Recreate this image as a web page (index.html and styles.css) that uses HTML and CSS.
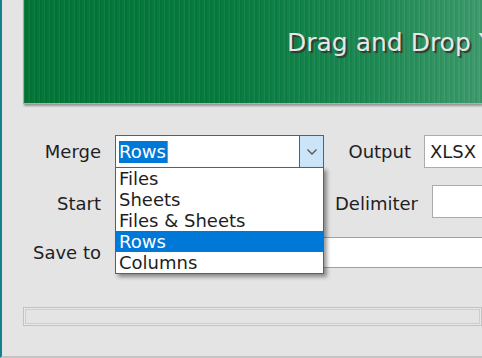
FILE: index.html
```html
<!DOCTYPE html>
<html lang="en">
<head>
    <meta charset="UTF-8">
    <title>Merge</title>
    <link rel="stylesheet" href="styles.css">
</head>
<body>
    <div class="banner">
        <span class="bannerText">Drag and Drop Your Files Here</span>
    </div>

    <div class="form">
        <div class="row rowMerge">
            <label class="label">Merge</label>
            <div class="combo">
                <div class="comboValue"><span class="selText">Rows</span></div>
                <div class="comboButton">
                    <svg width="10" height="6" viewBox="0 0 10 6"><path d="M0.5 0.5 L5 5 L9.5 0.5" fill="none" stroke="#555" stroke-width="1.3"/></svg>
                </div>
                <!-- open dropdown list -->
                <ul class="comboList">
                    <li>Files</li>
                    <li>Sheets</li>
                    <li>Files &amp; Sheets</li>
                    <li class="active">Rows</li>
                    <li>Columns</li>
                </ul>
            </div>
            <label class="subLabel outputLabel">Output</label>
            <div class="box">XLSX</div>
        </div>

        <div class="row rowStart">
            <label class="label">Start</label>
            <div class="field startField"></div>
            <label class="subLabel delimLabel">Delimiter</label>
            <div class="box"></div>
        </div>

        <div class="row rowSave">
            <label class="label">Save to</label>
            <div class="field saveField"></div>
        </div>
    </div>

    <div class="progress"></div>
</body>
</html>
```

FILE: styles.css
```css
body {
    margin: 0;
    width: 482px;
    height: 358px;
    box-sizing: border-box;
    border-left: 2px solid #14808a;
    border-bottom: 2px solid #c4c4c4;
    background: #e4e4e4;
    overflow: hidden;
    font-family: "DejaVu Sans", sans-serif;
    font-size: 18px;
    color: #1e1e24;
}

.banner {
    margin-left: 21px;
    height: 104px;
    box-sizing: border-box;
    border-left: 1px solid #a3aaa5;
    border-bottom: 1px solid #9fb8a8;
    box-shadow: 1px 2px 2px rgba(0,0,0,0.35);
    background:
        repeating-linear-gradient(90deg, rgba(255,255,255,0.05) 0 1px, rgba(0,0,0,0.05) 1px 3px, rgba(255,255,255,0) 3px 5px),
        linear-gradient(90deg, #037638 0%, #077c40 45%, #1d8a53 75%, #3e9c6d 100%);
    padding: 28px 0 0 263px;
    white-space: nowrap;
}

.bannerText {
    font-size: 25px;
    line-height: 30px;
    color: #e6e8e6;
    text-shadow: 2px 2px 1px #2f3a33;
}

.form {
    padding-top: 31px;
}

.row {
    display: flex;
    align-items: stretch;
}

.rowMerge {
    height: 33px;
}

.rowStart {
    margin-top: 17px;
    height: 33px;
}

.rowStart .label,
.rowStart .subLabel {
    padding-top: 4px;
}

.rowSave {
    margin-top: 19px;
    height: 31px;
}

.label {
    width: 99px;
    margin-right: 14px;
    display: flex;
    align-items: center;
    justify-content: flex-end;
    box-sizing: border-box;
}

.combo {
    position: relative;
    width: 209px;
    box-sizing: border-box;
    display: flex;
    border: 1px solid #0078d7;
    background: #fff;
}

.comboValue {
    flex: 1;
    display: flex;
    align-items: center;
    padding-left: 3px;
}

.selText {
    background: #0078d7;
    color: #fff;
    line-height: 22px;
    padding-right: 1px;
    border-right: 1px solid #d9822b;
}

.comboButton {
    width: 23px;
    border-left: 1px solid #0078d7;
    background: #cce4f7;
    display: flex;
    align-items: center;
    justify-content: center;
}

.comboList {
    position: absolute;
    left: -1px;
    top: 31px;
    width: 209px;
    box-sizing: border-box;
    margin: 0;
    padding: 0;
    list-style: none;
    background: #fff;
    border: 1px solid #0078d7;
    box-shadow: 3px 3px 4px rgba(0,0,0,0.4);
    z-index: 5;
}

.comboList li {
    height: 21px;
    line-height: 21px;
    padding-left: 3px;
}

.comboList li.active {
    background: #0078d7;
    color: #fff;
}

.subLabel {
    display: flex;
    align-items: center;
    justify-content: flex-end;
}

.outputLabel {
    width: 87px;
    padding-right: 13px;
}

.delimLabel {
    width: 94px;
    padding-right: 14px;
}

.box {
    flex: 1;
    border: 1px solid #ababab;
    border-right: none;
    background: #fff;
    padding-left: 5px;
    display: flex;
    align-items: center;
}

.field {
    border: 1px solid #a0a0a0;
    background: #fff;
}

.startField {
    width: 209px;
    box-sizing: border-box;
}

.saveField {
    flex: 1;
    border-right: none;
}

.progress {
    margin: 39px 0 0 21px;
    height: 19px;
    box-sizing: border-box;
    border: 1px solid #c2c2c2;
    box-shadow: inset 0 0 0 1px #e8e8e8, inset 0 0 0 2px #cdcdcd;
}
```
